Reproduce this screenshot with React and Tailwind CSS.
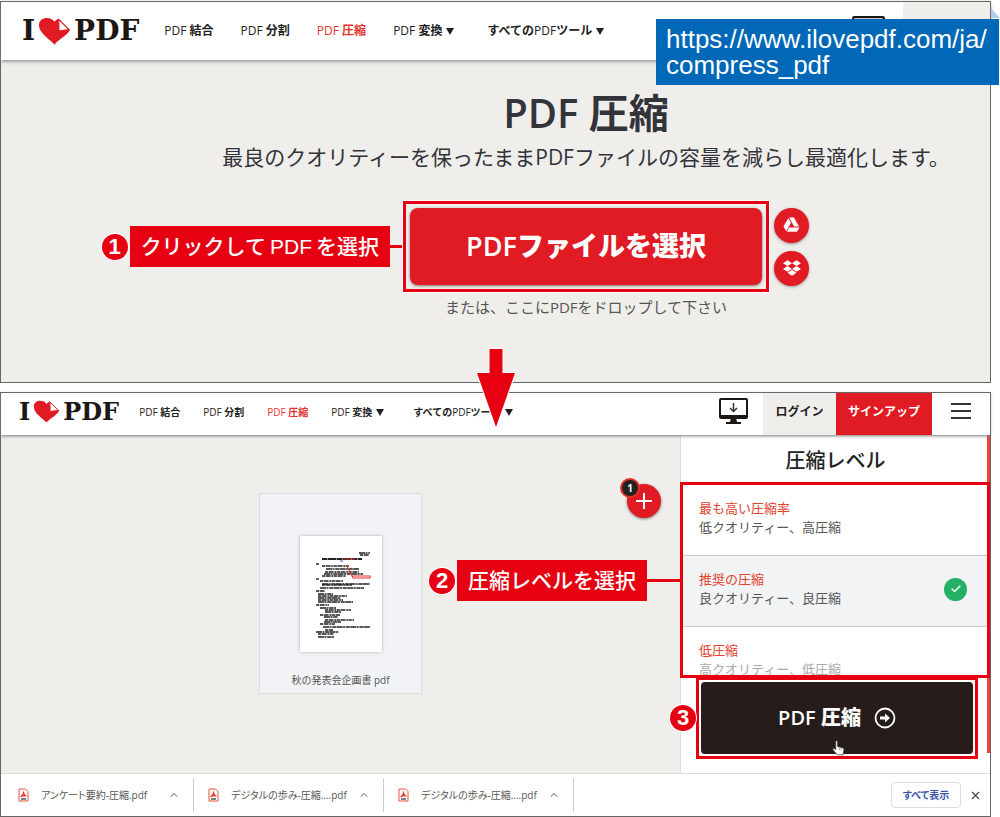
import React, { useState } from "react";
import { FaDropbox } from "react-icons/fa";
import { Check, ChevronUp, X } from "lucide-react";

const levels = [
  { id: "extreme", title: "最も高い圧縮率", text: "低クオリティー、高圧縮" },
  { id: "recommended", title: "推奨の圧縮", text: "良クオリティー、良圧縮" },
  { id: "low", title: "低圧縮", text: "高クオリティー、低圧縮" },
];

const downloads = [
  "アンケート要約-圧縮.pdf",
  "デジタルの歩み-圧縮....pdf",
  "デジタルの歩み-圧縮....pdf",
];

const Logo = ({ small }) => (
  <a
    href="#"
    className={`flex items-center gap-[3px] font-['DejaVu_Serif',serif] font-bold leading-none text-[#1d1714] ${
      small ? "text-[24px]" : "text-[28px]"
    }`}
  >
    <span>I</span>
    <svg viewBox="0 0 34 29" className={small ? "w-[27px]" : "w-[33px]"}>
      <path
        d="M17 28.5C14 24 1 17.500 1 8.500C1 3.500 5 1 9 1C12.500 1 15.500 2.500 17 5C18 3.500 19.500 2.400 21 1.800L33 13.500C30 19.500 20 24 17 28.500Z"
        fill="#e01b24"
      />
      <path d="M21.300 2.500L32 13L21.600 14.500Z" fill="#fff" stroke="#e01b24" strokeWidth="1.200" strokeLinejoin="round" />
    </svg>
    <span>PDF</span>
  </a>
);

const Caret = () => (
  <svg viewBox="0 0 8 7" className="w-2">
    <path d="M0 0H8L4 7Z" fill="currentColor" />
  </svg>
);

const Nav = ({ small }) => (
  <nav
    className={`flex items-center whitespace-nowrap text-[#222] ${
      small ? "ml-5 gap-[23px] text-[10px]" : "ml-[25px] gap-[27px] text-xs"
    }`}
  >
    <a href="#">PDF <b>結合</b></a>
    <a href="#">PDF <b>分割</b></a>
    <a href="#" className="text-[#e5322d]">PDF <b>圧縮</b></a>
    <button type="button" className="flex items-center gap-1">
      <span>PDF <b>変換</b></span>
      <Caret />
    </button>
    <button type="button" className="ml-1.5 flex items-center gap-1">
      <span><b>すべての</b>PDF<b>ツール</b></span>
      <Caret />
    </button>
  </nav>
);

const Monitor = ({ className }) => (
  <svg viewBox="0 0 29 27" className={className}>
    <rect x="1" y="1" width="27" height="19" rx="1" fill="#fff" stroke="#1d1714" strokeWidth="2" />
    <path d="M1 17H28V20H1ZM12 20H17L18 24H22V26H7V24H11Z" fill="#1d1714" />
    <path d="M14.500 5V13M11 10L14.500 13.500L18 10" fill="none" stroke="#333" strokeWidth="1.500" />
  </svg>
);

const StepNumber = ({ n }) => (
  <span className="flex size-[26px] shrink-0 items-center justify-center rounded-full bg-[#e60012] font-['Liberation_Sans',sans-serif] text-[22px] font-bold leading-none text-white ring-1 ring-white">
    {n}
  </span>
);

const Callout = ({ n, children, line }) => (
  <div className="flex items-center whitespace-nowrap">
    <StepNumber n={n} />
    <span className="ml-0.5 bg-[#e60012] px-[11px] font-['Liberation_Sans','Noto_Sans_CJK_JP',sans-serif] text-[21px] font-medium leading-[41px] text-white">
      {children}
    </span>
    <span className={`h-[3px] bg-[#e60012] ${line}`} />
  </div>
);

const DriveIcon = () => (
  <svg viewBox="0 0 18 16" className="w-[17px]" fill="#fff">
    <path d="M5.600 1.200L8.400 6L3.500 15L0.500 10Z" />
    <path d="M6.500 0.500H11.500L17 10H11.800Z" />
    <path d="M6.500 11H17.500L14.800 15.500H4.200Z" />
  </svg>
);

const PdfIcon = () => (
  <svg viewBox="0 0 11 14" className="w-[11px] shrink-0">
    <path d="M1 1H7.500L10 3.500V13H1Z" fill="#fff" stroke="#e5533d" />
    <path d="M5.500 3.500C5.800 6 4 8 2.500 9M5.500 3.500C5.200 6 7 8 8.500 8M3.500 7.800H7" fill="none" stroke="#e5322d" strokeWidth="1.200" />
    <path d="M3 11H8" stroke="#555" strokeWidth="1.500" />
  </svg>
);

// [x, y, width] of each text row on the page preview
const rows = [
  [59, 17, 11], [60, 19, 9], [16, 28, 3], [22, 30, 27], [26, 33, 33],
  [25, 36, 34], [24, 38, 39], [22, 40, 24], [16, 43, 3], [20, 45, 23],
  [22, 48, 48], [22, 49, 30], [20, 52, 44], [16, 55, 9], [18, 58, 15],
  [18, 60, 29], [18, 62, 23], [18, 64, 25], [18, 66, 35], [16, 69, 13],
  [20, 72, 16], [25, 74, 26], [25, 76, 16], [20, 79, 20], [24, 81, 14],
  [25, 84, 29], [24, 86, 17], [20, 88, 15], [23, 91, 47], [25, 94, 8],
  [16, 96, 23], [18, 98, 16], [18, 101, 16],
];

const PagePreview = () => (
  <svg viewBox="0 0 82 116" className="mt-[42px] w-[82px] bg-white shadow-[0_0_3px_#aaa]">
    <path d="M22 23H62" stroke="#222" strokeWidth="2" strokeDasharray="5 .5 9 .5" />
    <path d="M44 23H55" stroke="#e5322d" strokeWidth="1" />
    {rows.map(([x, y, w], i) => (
      <path
        key={i}
        d={`M${x} ${y}H${x + w}`}
        stroke="#222"
        strokeWidth="1.400"
        strokeDasharray={i % 2 ? "3 .6 5 .8 2 .5" : "6 .5 2 .7 4 .4"}
      />
    ))}
    <path d="M47 30L52 40H70V42H53L47 30" fill="none" stroke="#e33" strokeWidth="1.100" />
    <path d="M40 25H43" stroke="#44f" />
  </svg>
);

const HandCursor = () => (
  <svg viewBox="0 0 14 17" className="absolute left-[133px] top-[60px] w-[13px]">
    <path
      d="M4 1.500C4 .5 6 .5 6 1.500V7L12 8.500C13 9 13 10 12.700 11.500L12 16H5.500L1 10.500C.5 9.500 2 8.800 3 9.700L4 10.500Z"
      fill="#fff"
      stroke="#333"
      strokeWidth=".8"
    />
    <path d="M8 8V11M10 8.500V11" stroke="#777" strokeWidth=".7" />
  </svg>
);

const SelectPanel = () => (
  <section className="border border-[#666] bg-[#f0eeea]">
    <header className="relative flex h-[58px] items-center bg-white pl-[21px] shadow-[0_1px_4px_#777]">
      <Logo />
      <Nav />
      <div className="ml-auto flex items-start self-stretch">
        <Monitor className="mr-[18px] mt-[14px] w-[33px]" />
        <div className="w-[87px] self-stretch bg-[#f0eeea]" />
      </div>
    </header>

    <main className="pb-[65px] pt-[29px]">
      <div className="pl-[181px] text-center text-[#33333b]">
        <h1 className="text-[40px] leading-[48px]">
          <span className="font-semibold">PDF</span> <b>圧縮</b>
        </h1>
        <p className="mt-1.5 whitespace-nowrap text-[21px] leading-7">
          最良のクオリティーを保ったままPDFファイルの容量を減らし最適化します。
        </p>
      </div>

      <div className="mt-[30px] grid grid-cols-[402fr_366px_221fr] items-center">
        <div className="flex justify-end">
          <Callout n={1} line="w-[13px]">
            クリックして<span className="mx-1">PDF</span>を選択
          </Callout>
        </div>
        <div className="border-[3px] border-[#e60012] p-1 ring-1 ring-white">
          <button
            type="button"
            className="h-[77px] w-full rounded-lg bg-[#e01b24] text-[27px] font-semibold text-white shadow-[0_1px_3px_#777]"
          >
            PDF<b>ファイルを選択</b>
          </button>
        </div>
        <div className="ml-[5px] flex flex-col gap-2">
          <button type="button" aria-label="Google Drive" className="flex size-[35px] items-center justify-center rounded-full bg-[#e01b24] shadow-[0_1px_3px_#999]">
            <DriveIcon />
          </button>
          <button type="button" aria-label="Dropbox" className="flex size-[35px] items-center justify-center rounded-full bg-[#e01b24] text-white shadow-[0_1px_3px_#999]">
            <FaDropbox size={18} />
          </button>
        </div>
      </div>

      <p className="mt-[5px] pl-[181px] text-center text-[15px] leading-5 text-[#555]">
        または、ここにPDFをドロップして下さい
      </p>
    </main>
  </section>
);

const CompressPanel = () => {
  const [level, setLevel] = useState("recommended");

  return (
    <section className="border border-[#666] bg-white">
      <header className="relative z-10 flex h-[42px] bg-white pl-[18px] shadow-[0_1px_3px_#777]">
        <div className="flex items-center pb-1">
          <Logo small />
          <Nav small />
        </div>
        <div className="ml-auto flex items-stretch text-xs font-bold">
          <Monitor className="mr-[15px] mt-[5px] w-[29px] self-start" />
          <a href="#" className="flex w-[73px] items-center justify-center bg-[#f0eeea] pb-1 text-[#222]">ログイン</a>
          <a href="#" className="flex w-24 items-center justify-center bg-[#e01b24] pb-1 text-white">サインアップ</a>
          <button type="button" aria-label="メニュー" className="flex w-[58px] items-center justify-center pb-1.5">
            <svg viewBox="0 0 20 16" className="w-5">
              <path d="M0 1H20M0 8H20M0 15H20" stroke="#333" strokeWidth="1.800" />
            </svg>
          </button>
        </div>
      </header>

      <div className="flex h-[338px]">
        {/* Files */}
        <div className="relative flex flex-1 justify-center bg-[#f0eeea] pt-[58px]">
          <div className="flex h-[201px] w-[163px] flex-col items-center border border-[#dcdde0] bg-[#f1f3f6]">
            <PagePreview />
            <span className="mt-5 text-[10px] leading-4 text-[#555]">秋の発表会企画書 pdf</span>
          </div>
          <button
            type="button"
            aria-label="ファイルを追加"
            className="absolute right-[19px] top-[49px] flex size-[34px] items-center justify-center rounded-full bg-[#e01b24] shadow-[0_1px_3px_#777]"
          >
            <svg viewBox="0 0 16 16" className="w-4">
              <path d="M8 0V16M0 8H16" stroke="#fff" strokeWidth="2" />
            </svg>
            <span className="absolute -left-[7px] -top-[6px] flex size-5 items-center justify-center rounded-full border-2 border-[#e5322d] bg-[#222] text-[10px] font-bold text-white">
              1
            </span>
          </button>
          <div className="absolute right-0 top-[125px]">
            <Callout n={2} line="w-[33px]">圧縮レベルを選択</Callout>
          </div>
        </div>

        {/* Levels */}
        <aside className="relative w-[310px] border-l border-[#ddd] bg-white">
          <div className="absolute right-0 top-0 h-[318px] w-[3px] bg-[#ee4438]" />
          <h2 className="h-[47px] text-center text-xl font-medium leading-[51px] text-[#222]">
            圧縮レベル
          </h2>
          <fieldset className="relative -ml-px h-[196px] overflow-hidden border-[3px] border-[#e60012]">
            {levels.map((l) => (
              <label
                key={l.id}
                className={`flex h-[71px] items-center border-b border-[#ccc] pb-1 pl-4 pr-5 text-[13px] leading-[19px] ${
                  level === l.id ? "bg-[#f1f3f5]" : "bg-white"
                }`}
              >
                <input
                  type="radio"
                  name="level"
                  className="sr-only"
                  checked={level === l.id}
                  onChange={() => setLevel(l.id)}
                />
                <span className="flex-1">
                  <span className="block text-[#e0432f]">{l.title}</span>
                  <span className={`block ${l.id === "low" ? "text-[#aaa]" : "text-[#555]"}`}>{l.text}</span>
                </span>
                {level === l.id && (
                  <span className="flex size-[23px] items-center justify-center rounded-full bg-[#22b066] text-white">
                    <Check size={12} strokeWidth={3} />
                  </span>
                )}
              </label>
            ))}
          </fieldset>
          <div className="relative ml-[15px] mr-3 -mt-px border-[3px] border-[#e60012] p-0.5">
            <div className="absolute right-full top-1/2 mr-[3px] -translate-y-1/2">
              <StepNumber n={3} />
            </div>
            <button
              type="button"
              className="flex h-[72px] w-full items-center justify-center gap-[13px] rounded bg-[#261d1a] text-xl font-semibold text-white"
            >
              <span>PDF <b>圧縮</b></span>
              <svg viewBox="0 0 22 22" className="w-[22px]">
                <circle cx="11" cy="11" r="9.500" fill="none" stroke="#fff" strokeWidth="1.800" />
                <path d="M6 9.500H11V6.500L16 11L11 15.500V12.500H6Z" fill="#fff" />
              </svg>
            </button>
            <HandCursor />
          </div>
        </aside>
      </div>

      {/* Download bar */}
      <footer className="relative flex h-[43px] items-center border-t border-[#ddd] bg-white pl-[3px] pr-2">
        {downloads.map((name, i) => (
          <div key={i} className="my-1 flex w-[190px] items-center self-stretch border-r border-[#ccc] pl-3.5 pr-[13px]">
            <PdfIcon />
            <span className="ml-3 flex-1 whitespace-nowrap text-[10px] text-[#555] [font-feature-settings:'palt']">{name}</span>
            <button type="button" aria-label="開く">
              <ChevronUp size={12} color="#555" />
            </button>
          </div>
        ))}
        <button type="button" className="ml-auto h-[26px] w-[70px] rounded-sm border border-[#ddd] text-[10px] font-bold text-[#3a55a8] [font-feature-settings:'palt']">
          すべて表示
        </button>
        <button type="button" aria-label="閉じる" className="ml-2">
          <X size={13} color="#444" />
        </button>
      </footer>
    </section>
  );
};

const App = () => {
  return (
    <div className="bg-white pr-[9px] pt-px font-['Open_Sans','Noto_Sans_CJK_JP',sans-serif]">
      <div className="relative flex flex-col gap-[9px]">
        <SelectPanel />
        <CompressPanel />

        {/* Notes over the panels */}
        <svg viewBox="0 0 8 10" className="absolute -right-2 top-[7px] w-2">
          <path d="M0 0L8 9V10H0Z" fill="#b3cdec" />
        </svg>
        <div className="absolute -right-2 top-[18px] w-[343px] bg-[#0068b7] pb-[7px] pl-2.5 pt-[7px] font-['Liberation_Sans',sans-serif] text-[26px] leading-[26px] text-white">
          https://www.ilovepdf.com/ja/
          <br />
          compress_pdf
        </div>
        <svg viewBox="0 0 42 82" className="absolute left-1/2 top-[346px] z-20 w-[42px] -translate-x-1/2">
          <path d="M14.500 2H27.500V26H40L21 80L2 26H14.500Z" fill="#e60012" stroke="#fff" strokeWidth="2" paintOrder="stroke" />
        </svg>
      </div>
    </div>
  );
};

export default App;
